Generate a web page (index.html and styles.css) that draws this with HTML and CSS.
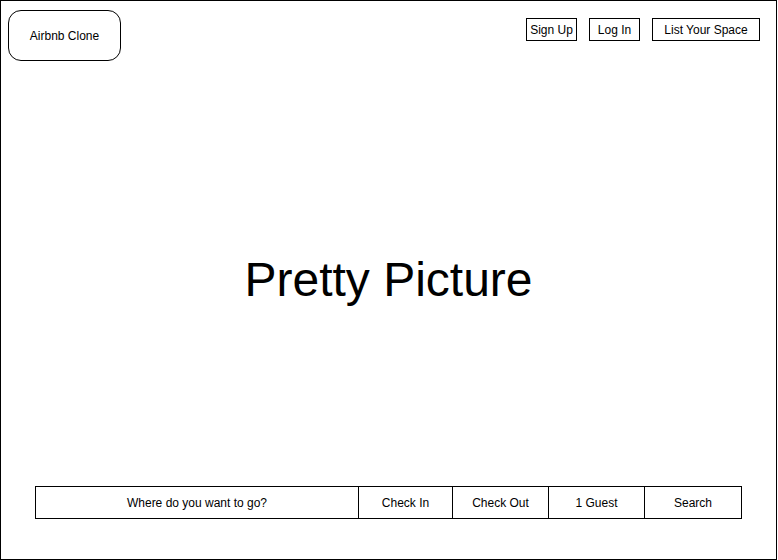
FILE: index.html
```html
<!DOCTYPE html>
<html lang="en">
<head>
<meta charset="utf-8">
<title>Airbnb Clone</title>
<link rel="stylesheet" href="styles.css">
</head>
<body>
<div class="page">
  <header class="header">
    <div class="logo">Airbnb Clone</div>
    <nav class="nav">
      <div class="nav-btn signup">Sign Up</div>
      <div class="nav-btn login">Log In</div>
      <div class="nav-btn list">List Your Space</div>
    </nav>
  </header>
  <main class="hero">
    <h1 class="hero-title">Pretty Picture</h1>
  </main>
  <div class="search">
    <div class="cell">Where do you want to go?</div>
    <div class="cell">Check In</div>
    <div class="cell">Check Out</div>
    <div class="cell">1 Guest</div>
    <div class="cell">Search</div>
  </div>
</div>
</body>
</html>
```

FILE: styles.css
```css
html, body {
  margin: 0;
  padding: 0;
  background: #fff;
}

body {
  font-family: "Liberation Sans", Arial, Helvetica, sans-serif;
  color: #000;
  font-size: 12px;
}

.page {
  box-sizing: border-box;
  width: 777px;
  height: 560px;
  border: 1px solid #000;
  display: flex;
  flex-direction: column;
}

.header {
  display: flex;
  justify-content: space-between;
  align-items: flex-start;
  padding: 9px 16px 0 7px;
}

.logo {
  box-sizing: border-box;
  width: 113px;
  height: 51px;
  border: 1px solid #000;
  border-radius: 13px;
  display: flex;
  align-items: center;
  justify-content: center;
  font-size: 12px;
}

.nav {
  display: flex;
  gap: 12px;
  margin-top: 8px;
}

.nav-btn {
  box-sizing: border-box;
  height: 23px;
  border: 1px solid #000;
  display: flex;
  align-items: center;
  justify-content: center;
  font-size: 12px;
  white-space: nowrap;
}

.signup { width: 51px; }
.login { width: 51px; }
.list { width: 108px; }

.hero {
  flex: 1;
  display: flex;
  align-items: center;
  justify-content: center;
  padding-top: 12px;
}

.hero-title {
  margin: 0;
  font-size: 48px;
  font-weight: normal;
  line-height: 48px;
}

.search {
  box-sizing: border-box;
  width: 707px;
  height: 33px;
  margin: 0 0 40px 34px;
  border: 1px solid #000;
  display: grid;
  grid-template-columns: 322px 94px 96px 96px 1fr;
}

.cell {
  display: flex;
  align-items: center;
  justify-content: center;
  font-size: 12px;
  white-space: nowrap;
}

.cell + .cell {
  border-left: 1px solid #000;
}
```
